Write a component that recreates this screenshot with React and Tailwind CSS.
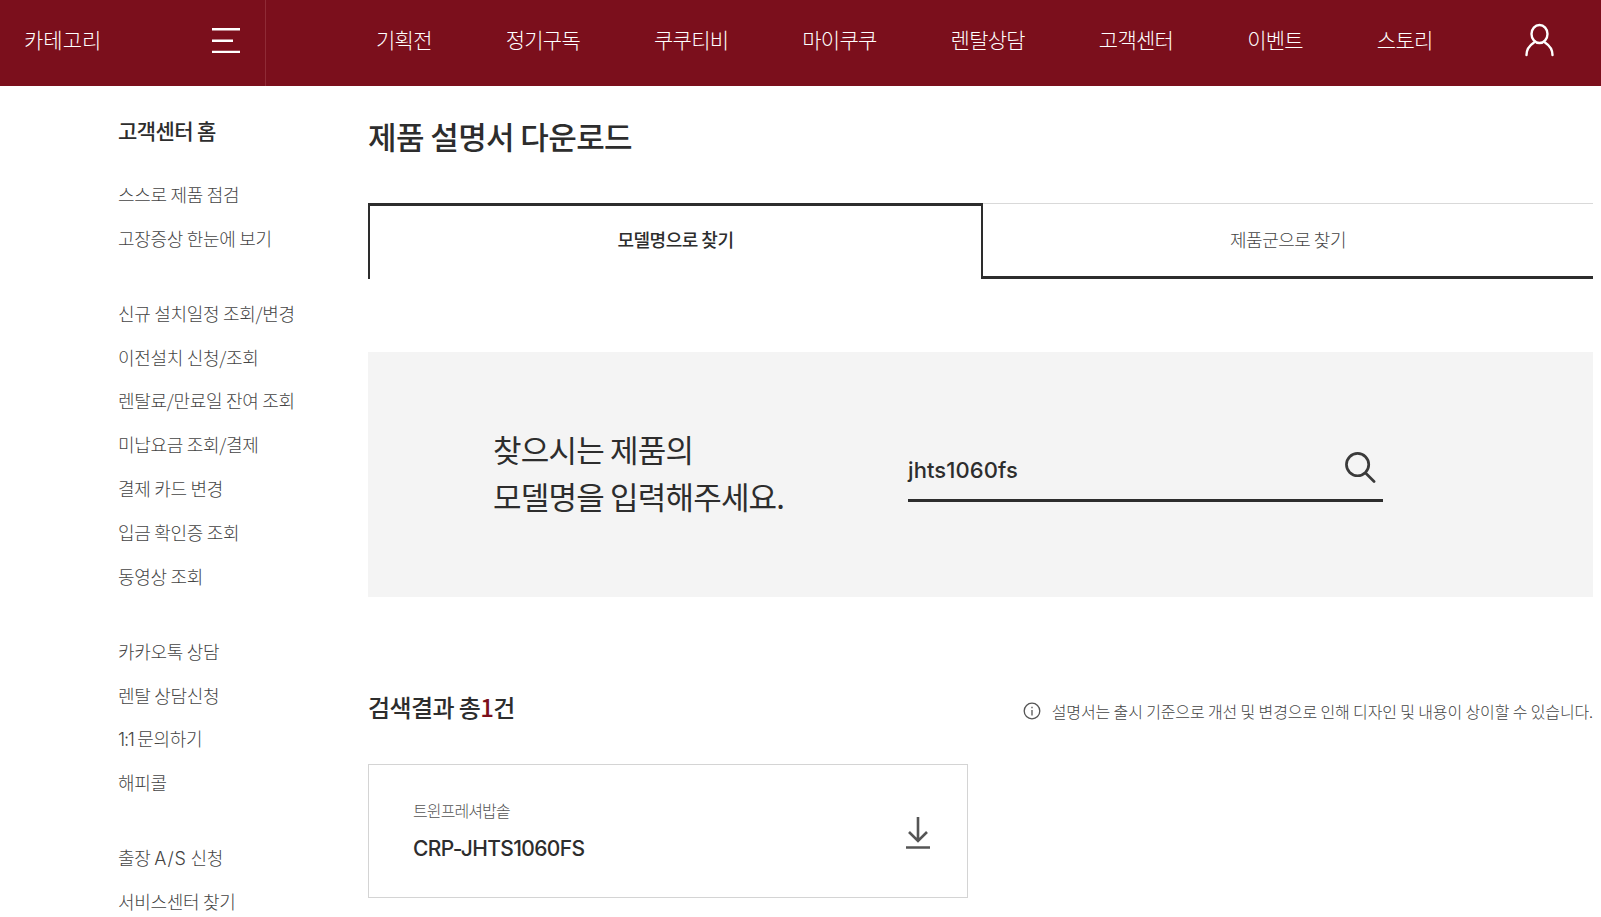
const FONT = "font-['Noto_Sans_CJK_KR','Noto_Sans',sans-serif]";

const navItems = ["기획전", "정기구독", "쿠쿠티비", "마이쿠쿠", "렌탈상담", "고객센터", "이벤트", "스토리"];

const groups = [
  ["스스로 제품 점검", "고장증상 한눈에 보기"],
  ["신규 설치일정 조회/변경", "이전설치 신청/조회", "렌탈료/만료일 잔여 조회", "미납요금 조회/결제", "결제 카드 변경", "입금 확인증 조회", "동영상 조회"],
  ["카카오톡 상담", "렌탈 상담신청", <><span className="font-['Inter',sans-serif] tracking-[-1.2px]">1:1</span> 문의하기</>, "해피콜"],
  [<>출장 <span className="font-['Inter',sans-serif] tracking-[0.8px]">A/S</span> 신청</>, "서비스센터 찾기"],
];

function Header() {
  return (
    <header className="flex h-[86px] bg-[#7b0f1c] text-white">
      <div className="flex w-[266px] shrink-0 items-center justify-between border-r border-[#8f2b36] pl-6 pr-[25px] pb-[6px]">
        <span className="text-[21px] font-light tracking-[0px]">카테고리</span>
        <svg width="28" height="26" viewBox="0 0 28 26" fill="none" stroke="#fff" strokeWidth="2.500">
          <path d="M0 2.300H28M0 13.700H21M0 25H28" />
        </svg>
      </div>
      <nav className="flex flex-1 items-center gap-[74px] pl-[110px] pb-[6px]">
        {navItems.map((t) => (
          <span key={t} className="text-[21px] font-light tracking-[-0.75px]">{t}</span>
        ))}
      </nav>
      <div className="flex items-center pr-[45px] pb-[6px]">
        <svg width="32" height="34" viewBox="0 0 32 34" fill="none" stroke="#fff" strokeWidth="2.400" strokeLinecap="round">
          <ellipse cx="15.500" cy="11" rx="8" ry="9" />
          <path d="M2.500 32C2.500 25.500 6.500 21.800 10 19.500M28.500 32C28.500 25.500 24.500 21.800 21 19.500" />
        </svg>
      </div>
    </header>
  );
}

function Sidebar() {
  return (
    <aside className="w-[368px] shrink-0 pl-[118px] pt-[27px] text-[#333]">
      <div className="h-[34px] text-[21px] leading-[34px] font-medium tracking-[-0.6px] text-[#2d2d2d]">고객센터 홈</div>
      <div className="flex flex-col gap-[31.300px] pt-[26px]">
        {groups.map((g, i) => (
          <ul key={i} className="flex flex-col">
            {g.map((t, j) => (
              <li key={j} className="h-[43.800px] text-[18px] leading-[43.800px] font-light tracking-[-0.3px] text-[#444]">{t}</li>
            ))}
          </ul>
        ))}
      </div>
    </aside>
  );
}

function Main() {
  return (
    <main className="w-[1225px] shrink-0 pt-[28px] text-[#2d2d2d]">
      <h1 className="h-[44px] text-[31px] leading-[44px] font-medium tracking-[-0.6px]">제품 설명서 다운로드</h1>
      <div className="mt-[45px] flex h-[76px]">
        <div className="flex w-[615px] items-center justify-center border-x-2 border-t-[3px] border-[#2d2d2d] pb-[7px] text-[18px] font-medium tracking-[-0.5px]">모델명으로 찾기</div>
        <div className="flex flex-1 items-center justify-center border-t border-b-[3px] border-t-[#d9d9d9] border-b-[#2d2d2d] pb-[2px] text-[18px] font-light tracking-[-0.5px] text-[#444]">제품군으로 찾기</div>
      </div>
      <section className="mt-[73px] flex h-[245px] items-center bg-[#f4f4f4] pl-[125px]">
        <p className="mb-[6px] w-[415px] text-[31px] leading-[47px] tracking-[-0.8px]">찾으시는 제품의<br />모델명을 입력해주세요.</p>
        <div className="mb-[2px] flex h-[56px] w-[475px] items-center justify-between border-b-[3px] border-[#2d2d2d] pb-[4px]">
          <span className="font-['Inter',sans-serif] text-[22px] font-medium tracking-[0.1px]">jhts1060fs</span>
          <svg className="mb-[6px] mr-[7px]" width="31" height="31" viewBox="0 0 32 32" fill="none" stroke="#3a3a3a" strokeWidth="2.800" strokeLinecap="round">
            <circle cx="13" cy="13" r="11.500" />
            <path d="M22 22.500 30 30.500" />
          </svg>
        </div>
      </section>
      <div className="mt-[87px] flex h-[46px] items-center justify-between">
        <h2 className="text-[24px] font-medium tracking-[-0.6px]">검색결과 총<span className="text-[#7b0f1c]">1</span>건</h2>
        <div className="flex items-center gap-[11px] pt-[7px] text-[16px] font-light tracking-[-0.12px] text-[#444]">
          <svg width="18" height="18" viewBox="0 0 18 18" fill="none" stroke="#555" strokeWidth="1.300">
            <circle cx="9" cy="9" r="7.800" />
            <path d="M9 8v5.500M9 4.800v1.500" />
          </svg>
          <span>설명서는 출시 기준으로 개선 및 변경으로 인해 디자인 및 내용이 상이할 수 있습니다.</span>
        </div>
      </div>
      <div className="mt-[34px] flex h-[134px] w-[600px] items-center justify-between border border-[#d4d4d4] pl-[44px] pr-[36px]">
        <div>
          <div className="text-[16px] font-light tracking-[-0.9px] text-[#555]">트윈프레셔밥솥</div>
          <div className="mt-[11px] font-['Inter',sans-serif] text-[21px] font-medium tracking-[-0.65px]">CRP-JHTS1060FS</div>
        </div>
        <svg className="mt-[3px]" width="26" height="32" viewBox="0 0 26 32" fill="none" stroke="#555" strokeWidth="2.600">
          <path d="M13 0V23M4 15l9 9 9-9M1 30.500H25" />
        </svg>
      </div>
    </main>
  );
}

export default function App() {
  return (
    <div className={`h-[917px] overflow-hidden bg-white ${FONT}`}>
      <Header />
      <div className="flex">
        <Sidebar />
        <Main />
      </div>
    </div>
  );
}
